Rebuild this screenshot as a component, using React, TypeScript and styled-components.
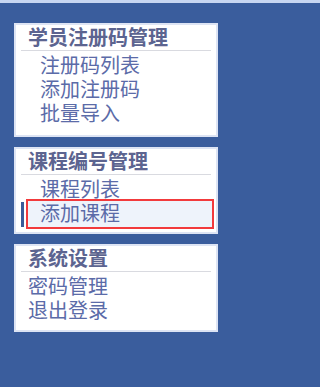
import styled, { createGlobalStyle, css } from 'styled-components';

const GlobalStyle = createGlobalStyle`
  html, body {
    margin: 0;
    padding: 0;
    background: #3a5d9d;
  }
  body {
    font-family: "Noto Sans CJK SC", "Noto Sans", sans-serif;
  }
`;

// Styles
const Page = styled.div`
  min-height: 100vh;
  box-sizing: border-box;
  border-top: 3px solid #c7d6f1;
  padding: 20px 0 0 14px;
  background: #3a5d9d;
`;

const Panel = styled.section<{ $padBottom: number }>`
  width: 204px;
  box-sizing: border-box;
  background: #ffffff;
  border: 2px solid #dde4f4;
  padding-bottom: ${({ $padBottom }) => $padBottom}px;
  margin-bottom: 10px;
`;

const PanelTitle = styled.h3`
  margin: 0 5px;
  padding: 0 0 1px 7px;
  font-size: 20px;
  line-height: 24px;
  font-weight: 700;
  color: #5c6490;
  border-bottom: 1px solid #d9dae0;
`;

const MenuList = styled.ul`
  list-style: none;
  margin: 2px 0 0;
  padding: 0;
`;

const MenuItem = styled.li<{ $flush?: boolean; $active?: boolean }>`
  position: relative;
  margin: 0 4px 0 12px;
  padding-left: ${({ $flush }) => ($flush ? '0' : '12px')};
  font-size: 20px;
  line-height: 24px;
  color: #5b6ba8;
  cursor: pointer;

  ${({ $active }) =>
    $active &&
    css`
      background: #eef3fb;
      outline: 2px solid #f23a3c;
      padding-bottom: 2px;

      &::before {
        content: '';
        position: absolute;
        left: -7px;
        top: 1px;
        bottom: 0;
        width: 3px;
        background: #3a5a99;
      }
    `}
`;

const menus = [
  {
    title: '学员注册码管理',
    items: ['注册码列表', '添加注册码', '批量导入'],
    padBottom: 10,
  },
  {
    title: '课程编号管理',
    items: ['课程列表', '添加课程'],
    active: '添加课程',
    padBottom: 5,
  },
  {
    title: '系统设置',
    items: ['密码管理', '退出登录'],
    flush: true,
    padBottom: 8,
  },
];

const App = () => {
  return (
    <>
      <GlobalStyle />
      <Page>
        {menus.map((menu) => (
          <Panel key={menu.title} $padBottom={menu.padBottom}>
            <PanelTitle>{menu.title}</PanelTitle>
            <MenuList>
              {menu.items.map((item) => (
                <MenuItem
                  key={item}
                  $flush={menu.flush}
                  $active={menu.active === item}
                >
                  {item}
                </MenuItem>
              ))}
            </MenuList>
          </Panel>
        ))}
      </Page>
    </>
  );
};

export default App;
